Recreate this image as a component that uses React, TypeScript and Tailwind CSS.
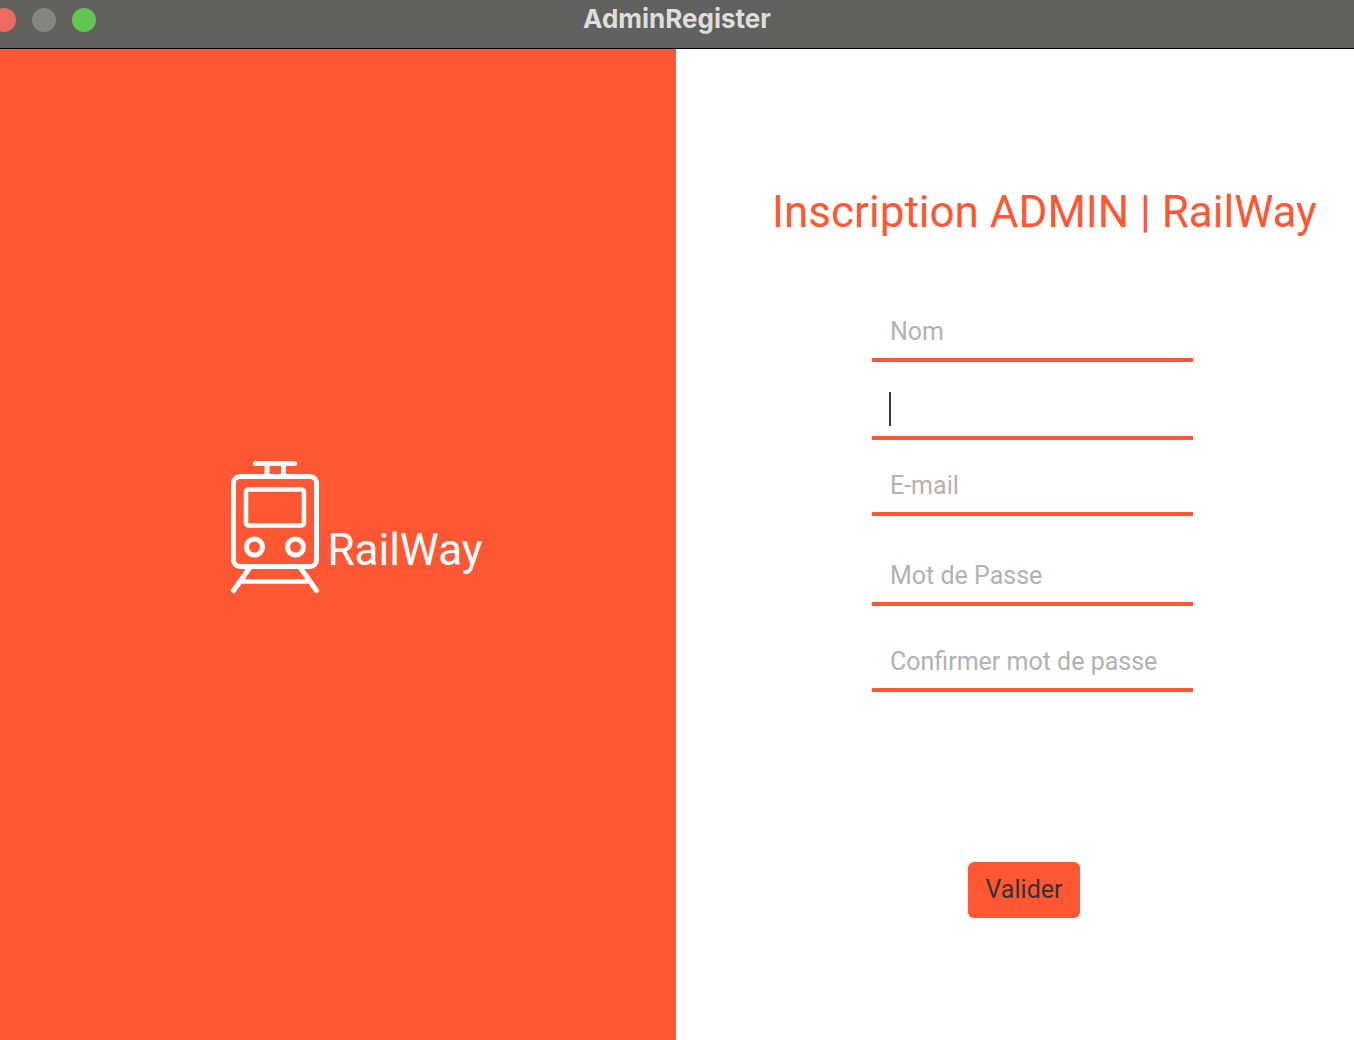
import React from "react";

type FieldProps = {
  id: string;
  label: string;
  type?: string;
  placeholder?: string;
  focused?: boolean;
  className?: string;
};

function Field({ id, label, type = "text", placeholder, focused = false, className = "" }: FieldProps) {
  return (
    <div className={`relative w-full ${className}`}>
      <input
        id={id}
        name={id}
        type={type}
        aria-label={label}
        placeholder={placeholder}
        className="block h-[58px] w-full border-b-4 border-[#ff5733] bg-transparent px-[18px] text-[25px] text-[#333333] caret-transparent outline-none placeholder:text-[#b2b2b2]"
      />
      {focused && <span aria-hidden="true" className="absolute top-[10px] left-[17px] h-[34px] w-[2px] bg-[#333638]" />}
    </div>
  );
}

function TrainIcon() {
  return (
    <svg aria-hidden="true" viewBox="0 0 88 134" className="h-[134px] w-[88px] shrink-0" fill="none" stroke="#fff" strokeLinecap="round" strokeLinejoin="round">
      <path d="M24.5 3.5H63.5" strokeWidth="5" />
      <path d="M36 4V16M52.5 4V16" strokeWidth="5" strokeLinecap="butt" />
      <rect x="2.5" y="16.5" width="83" height="90" rx="6.5" strokeWidth="5" />
      <rect x="15" y="29.5" width="58" height="36" rx="2.5" strokeWidth="4.5" />
      <circle cx="23.5" cy="87" r="8" strokeWidth="5" />
      <circle cx="64.5" cy="87" r="8" strokeWidth="5" />
      <path d="M18.5 108L2.5 130.5M69.5 108L85.5 130.5" strokeWidth="5" />
      <path d="M11 121.5H77" strokeWidth="4.5" />
    </svg>
  );
}

export default function App() {
  return (
    <div className="flex min-h-screen flex-col bg-white font-['Roboto',sans-serif]">
      <header className="relative flex h-[49px] items-center justify-center overflow-hidden border-b border-black bg-[#61615f] pb-[10px]">
        <div className="absolute top-2 -left-2 flex gap-4">
          <button type="button" aria-label="Fermer" className="size-6 rounded-full bg-[#ed6a5e]" />
          <button type="button" aria-label="Réduire" className="size-6 rounded-full bg-[#848482]" />
          <button type="button" aria-label="Agrandir" className="size-6 rounded-full bg-[#62c554]" />
        </div>
        <h1 className="font-['Inter',sans-serif] text-[26px] leading-8 font-bold text-[#dededd]">AdminRegister</h1>
      </header>
      <main className="grid flex-1 grid-cols-[676fr_678fr]">
        <section className="flex items-center justify-center bg-[#ff5733] pb-9 pl-[38px]">
          <div className="flex items-end gap-2">
            <TrainIcon />
            <p className="pb-4 text-[44px] leading-[56px] text-white">RailWay</p>
          </div>
        </section>
        <section className="flex flex-col items-center pt-[135px]">
          <h2 className="ml-[59px] text-[44px] leading-[56px] whitespace-nowrap text-[#ff5733]">Inscription ADMIN | RailWay</h2>
          <form className="flex w-full flex-col items-center pt-16" onSubmit={(e) => e.preventDefault()}>
            <div className="ml-[35px] w-[321px]">
              <Field id="nom" label="Nom" placeholder="Nom" />
              <Field id="prenom" label="Prénom" focused className="mt-5" />
              <Field id="email" label="E-mail" type="email" placeholder="E-mail" className="mt-[18px]" />
              <Field id="password" label="Mot de Passe" type="password" placeholder="Mot de Passe" className="mt-8" />
              <Field id="confirm" label="Confirmer mot de passe" type="password" placeholder="Confirmer mot de passe" className="mt-7" />
            </div>
            <button type="submit" className="mt-[170px] ml-[18px] h-14 w-28 rounded-md bg-[#ff5733] text-[25px] text-[#333333]">
              Valider
            </button>
          </form>
        </section>
      </main>
    </div>
  );
}
